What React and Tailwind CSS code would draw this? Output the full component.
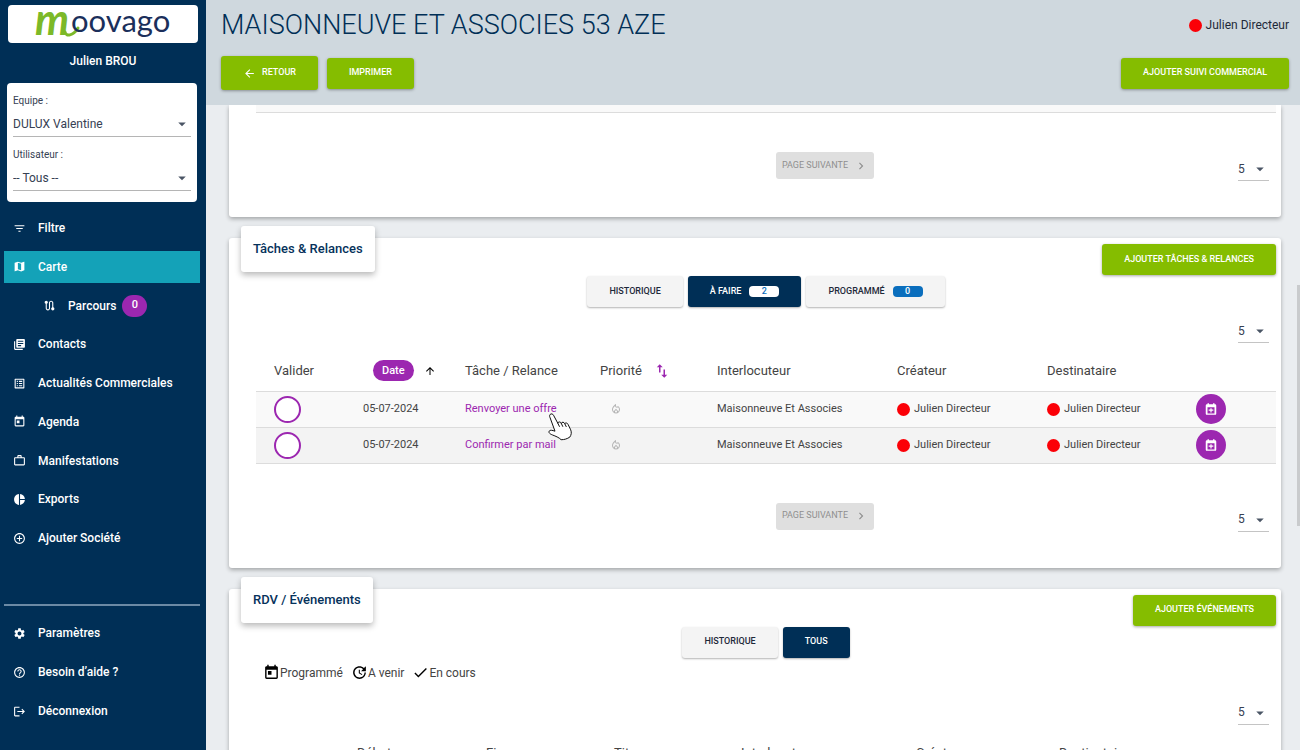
import { useState } from "react";
import clsx from "clsx";
import {
  MdAddCircleOutline,
  MdArrowBack,
  MdArrowDropDown,
  MdArrowUpward,
  MdCheck,
  MdChevronRight,
  MdFilterList,
  MdHelpOutline,
  MdLibraryBooks,
  MdListAlt,
  MdLogout,
  MdMap,
  MdOutlineLocalFireDepartment,
  MdPieChart,
  MdRoute,
  MdSettings,
  MdSwapVert,
  MdToday,
  MdUpdate,
  MdWorkOutline,
} from "react-icons/md";

const mainLinks = [
  { label: "Filtre", icon: MdFilterList },
  { label: "Carte", icon: MdMap, active: true },
  { label: "Parcours", icon: MdRoute, nested: true, count: 0 },
  { label: "Contacts", icon: MdLibraryBooks },
  { label: "Actualités Commerciales", icon: MdListAlt },
  { label: "Agenda", icon: MdToday },
  { label: "Manifestations", icon: MdWorkOutline },
  { label: "Exports", icon: MdPieChart },
  { label: "Ajouter Société", icon: MdAddCircleOutline },
];

const footerLinks = [
  { label: "Paramètres", icon: MdSettings },
  { label: "Besoin d’aide ?", icon: MdHelpOutline },
  { label: "Déconnexion", icon: MdLogout },
];

const tasks = [
  { id: 1, date: "05-07-2024", label: "Renvoyer une offre", contact: "Maisonneuve Et Associes", user: "Julien Directeur", hovered: true },
  { id: 2, date: "05-07-2024", label: "Confirmer par mail", contact: "Maisonneuve Et Associes", user: "Julien Directeur" },
];

function Logo() {
  return (
    <svg viewBox="0 0 188 38" className="h-[38px] w-[188px] overflow-visible" role="img" aria-label="Moovago">
      <text x="26" y="30" fontFamily="Lato, sans-serif" fontSize="43" fontWeight="700" fontStyle="italic" fill="#7cb928">m</text>
      <path d="M56 27c1 5 8 4 13-4" fill="none" stroke="#7cb928" strokeWidth="3" strokeLinecap="round" />
      <text x="62" y="27" fontFamily="Lato, sans-serif" fontSize="31" fill="#1b2f5b">oovago</text>
    </svg>
  );
}

function HandCursor() {
  return (
    <svg viewBox="0 0 26 30" className="pointer-events-none absolute top-[20px] left-[83px] z-10 h-[30px] w-[26px]">
      <path
        d="M2.2 2.4c1-1 2.600-.5 3.300.8l4.300 8c.2-1.500 2.700-1.900 3.500.1.500-1.500 2.800-1.500 3.500.4.600-1.100 2.600-1 3.300.8l2.600 5.300c1.100 2.800.6 5.100-.9 7.300-2.600 1.700-5.500 2.700-8.700 2.600-2.200-2.300-5.500-3.500-8.500-4.700-2.300-.8-4.400-2.300-3.400-3.900.9-1.400 3.200-.8 5.800.1L1.900 5.200c-.5-1-.4-2.100.3-2.800z"
        fill="#fff"
        stroke="#111"
        strokeWidth="1"
        strokeLinejoin="round"
      />
      <path d="M9.800 11.200l1.600 3.200M13.300 11.400l1.400 3M16.800 11.700l1.400 2.900" fill="none" stroke="#111" strokeWidth="1" strokeLinecap="round" />
    </svg>
  );
}

function CalendarPlusIcon() {
  return (
    <svg viewBox="0 0 24 24" className="size-3.5">
      <path fill="currentColor" fillRule="evenodd" d="M19 4h-1V2h-2.500v2h-7V2H6v2H5a2 2 0 0 0-2 2v14a2 2 0 0 0 2 2h14a2 2 0 0 0 2-2V6a2 2 0 0 0-2-2zM6 9h12v10.500H6z" />
      <path fill="currentColor" d="M11 10.500h2V13h3v2h-3v2.800h-2V15H8v-2h3z" />
    </svg>
  );
}

function SidebarSelect({ id, label, options }) {
  return (
    <div>
      <label htmlFor={id} className="block h-4 text-[10px] leading-[18px] text-gray-700">{label}</label>
      <div className="relative mt-1 border-b border-[#b5b5b5]">
        <select id={id} className="block h-6 w-full appearance-none bg-transparent text-[12px] text-gray-700 outline-none">
          {options.map((option) => (
            <option key={option}>{option}</option>
          ))}
        </select>
        <MdArrowDropDown className="pointer-events-none absolute top-[3px] right-0 size-[18px] text-gray-600" />
      </div>
    </div>
  );
}

function NavLink({ item }) {
  const Icon = item.icon;
  return (
    <a
      href="#"
      className={clsx(
        "flex h-8 items-center text-[12px] font-medium text-white",
        item.nested ? "pl-[39px]" : "pl-[9px]",
        item.active && "bg-[#14a2b8]"
      )}
    >
      <Icon className="mr-3 size-[13px]" />
      {item.label}
      {item.count !== undefined && (
        <span className="ml-1.5 flex h-[22px] w-[25px] items-center justify-center rounded-full bg-[#9c27b0] text-[11px]">{item.count}</span>
      )}
    </a>
  );
}

function Sidebar() {
  return (
    <aside className="flex w-[206px] shrink-0 flex-col bg-[#002f56]">
      <div className="mx-2 mt-[5px] flex h-[38px] justify-center rounded bg-white">
        <Logo />
      </div>
      <p className="pt-[7px] pb-[11px] text-center text-[12px] leading-[22px] font-medium text-white">Julien BROU</p>
      <div className="mr-[9px] ml-[7px] space-y-[9px] rounded bg-white px-1.5 pt-[9px] pb-[11px]">
        <SidebarSelect id="equipe" label="Equipe :" options={["DULUX Valentine"]} />
        <SidebarSelect id="utilisateur" label="Utilisateur :" options={["-- Tous --"]} />
      </div>
      <nav className="flex flex-1 flex-col justify-between pt-2.5 pr-1.5 pb-[50px] pl-1">
        {mainLinks.map((item) => (
          <NavLink key={item.label} item={item} />
        ))}
      </nav>
      <nav className="mr-1.5 ml-1 flex flex-col gap-[7px] border-t-2 border-[#6b8aa5] pt-[11px] pb-[23px]">
        {footerLinks.map((item) => (
          <NavLink key={item.label} item={item} />
        ))}
      </nav>
    </aside>
  );
}

function GreenButton({ children, className }) {
  return (
    <button type="button" className={clsx("flex items-center justify-center rounded-[3px] bg-[#85bd00] px-[22px] text-[9px] font-medium text-white shadow-[0_1px_3px_rgba(0,0,0,0.35)]", className)}>
      {children}
    </button>
  );
}

function TabButton({ active, onClick, children }) {
  return (
    <button
      type="button"
      onClick={onClick}
      className={clsx(
        "flex h-[31px] items-center rounded-[3px] px-[22px] text-[9px] font-medium shadow-[0_1px_2px_rgba(0,0,0,0.3)]",
        active ? "bg-[#002f56] text-white" : "bg-[#f4f4f4] text-gray-800"
      )}
    >
      {children}
    </button>
  );
}

function PageSize({ label }) {
  return (
    <div className="relative ml-auto w-[31px] border-b border-[#c4c4c4]">
      <select aria-label={label} className="block h-[23px] w-full appearance-none bg-transparent text-[12px] text-gray-700 outline-none">
        <option>5</option>
        <option>10</option>
        <option>20</option>
      </select>
      <MdArrowDropDown className="pointer-events-none absolute top-[3px] right-0 size-[18px] text-gray-600" />
    </div>
  );
}

function Pager({ label }) {
  return (
    <div className="grid grid-cols-[1fr_auto_1fr] items-end pt-[39px] pr-[7px] pb-9 pl-[125px]">
      <span />
      <button type="button" disabled className="mb-0.5 flex h-[27px] items-center rounded-[3px] bg-[#dfdfdf] px-1.5 text-[9px] text-[#8f8f8f]">
        PAGE SUIVANTE
        <MdChevronRight className="ml-1.5 size-[14px]" />
      </button>
      <PageSize label={label} />
    </div>
  );
}

function UserTag({ name }) {
  return (
    <span className="flex items-center gap-1">
      <span className="size-[13px] rounded-full bg-[#fb0007]" />
      {name}
    </span>
  );
}

function Card({ title, action, children }) {
  return (
    <section className="mt-[21px] rounded-[3px] bg-white pr-[5px] pl-[27px] shadow-[0_2px_4px_rgba(0,0,0,0.3)]">
      <div className="-ml-[15px] flex h-[38px] items-start justify-between">
        <h2 className="-mt-3 rounded-[3px] bg-white px-3 text-[13px] leading-[46px] font-medium text-[#06325b] shadow-[0_3px_6px_rgba(0,0,0,0.28)]">{title}</h2>
        <GreenButton className="mt-1.5 h-[31px]">{action}</GreenButton>
      </div>
      {children}
    </section>
  );
}

function TasksCard() {
  const [tab, setTab] = useState("todo");

  return (
    <Card title="Tâches & Relances" action="AJOUTER TÂCHES & RELANCES">
      <div className="flex justify-center gap-[5px]">
        <TabButton active={tab === "history"} onClick={() => setTab("history")}>HISTORIQUE</TabButton>
        <TabButton active={tab === "todo"} onClick={() => setTab("todo")}>
          À FAIRE
          <span className="ml-2 w-[30px] rounded bg-white text-center leading-[11px] text-[#0a6ebd]">2</span>
        </TabButton>
        <TabButton active={tab === "planned"} onClick={() => setTab("planned")}>
          PROGRAMMÉ
          <span className="ml-2 w-[30px] rounded bg-[#0a6ebd] text-center leading-[11px] text-white">0</span>
        </TabButton>
      </div>
      <div className="pt-3 pr-[7px]">
        <PageSize label="Tâches par page" />
      </div>
      <table className="w-full table-fixed border-collapse text-left text-[11px] text-[#444]">
        <colgroup>
          <col className="w-[107px]" />
          <col className="w-[102px]" />
          <col className="w-[135px]" />
          <col className="w-[117px]" />
          <col className="w-[180px]" />
          <col className="w-[150px]" />
          <col className="w-[149px]" />
          <col className="w-[80px]" />
        </colgroup>
        <thead>
          <tr className="h-12 text-[13px] text-[#444] [&>th]:pt-2 [&>th]:font-normal">
            <th className="pl-[18px]">Valider</th>
            <th>
              <span className="flex items-center pl-2.5">
                <span className="rounded-full bg-[#9c27b0] px-[9px] text-[11px] leading-[21px] font-medium text-white">Date</span>
                <MdArrowUpward className="ml-2.5 size-3 text-black" />
              </span>
            </th>
            <th>Tâche / Relance</th>
            <th>
              <span className="flex items-center">
                Priorité
                <MdSwapVert className="ml-[11px] size-[18px] text-[#9c27b0]" />
              </span>
            </th>
            <th>Interlocuteur</th>
            <th>Créateur</th>
            <th>Destinataire</th>
            <th aria-label="Planifier"></th>
          </tr>
        </thead>
        <tbody>
          {tasks.map((task) => (
            <tr key={task.id} className="h-9 border-y border-[#dcdcdc] odd:bg-[#f9f9f9] even:bg-[#f3f3f3]">
              <td className="pl-[18px]">
                <button type="button" aria-label={`Valider ${task.label}`} className="block size-[27px] rounded-full border-2 border-[#9c27b0] bg-white" />
              </td>
              <td>{task.date}</td>
              <td className="relative">
                <a href="#" className="text-[#9c27b0]">{task.label}</a>
                {task.hovered && <HandCursor />}
              </td>
              <td>
                <MdOutlineLocalFireDepartment className="ml-2.5 size-3 text-[#b5b5b5]" />
              </td>
              <td>{task.contact}</td>
              <td><UserTag name={task.user} /></td>
              <td><UserTag name={task.user} /></td>
              <td>
                <button type="button" aria-label={`Planifier ${task.label}`} className="flex size-[30px] items-center justify-center rounded-full bg-[#9c27b0] text-white">
                  <CalendarPlusIcon />
                </button>
              </td>
            </tr>
          ))}
        </tbody>
      </table>
      <Pager label="Nombre de tâches" />
    </Card>
  );
}

function EventsCard() {
  const [tab, setTab] = useState("all");

  return (
    <Card title="RDV / Événements" action="AJOUTER ÉVÉNEMENTS">
      <div className="flex justify-center gap-[5px]">
        <TabButton active={tab === "history"} onClick={() => setTab("history")}>HISTORIQUE</TabButton>
        <TabButton active={tab === "all"} onClick={() => setTab("all")}>TOUS</TabButton>
      </div>
      <div className="flex items-center gap-2 pt-1.5 pl-[7px] text-[12px] leading-[18px] text-[#444]">
        <span className="flex items-center"><MdToday className="size-[17px] text-black" />Programmé</span>
        <span className="flex items-center"><MdUpdate className="size-[17px] text-black" />A venir</span>
        <span className="flex items-center"><MdCheck className="size-[17px] text-black" />En cours</span>
      </div>
      <div className="pt-[19px] pr-[7px]">
        <PageSize label="Événements par page" />
      </div>
      <table className="w-full table-fixed text-left">
        <colgroup>
          <col className="w-[101px]" />
          <col className="w-[129px]" />
          <col className="w-[128px]" />
          <col className="w-[127px]" />
          <col className="w-[175px]" />
          <col className="w-[143px]" />
          <col className="w-[217px]" />
        </colgroup>
        <thead>
          <tr className="h-12 text-[13px] text-[#444] [&>th]:pt-2 [&>th]:font-normal">
            <th aria-label="Statut"></th>
            <th>Début</th>
            <th>Fin</th>
            <th>Titre</th>
            <th>Interlocuteur</th>
            <th>Créateur</th>
            <th>Destinataire</th>
          </tr>
        </thead>
      </table>
    </Card>
  );
}

export default function App() {
  return (
    <div className="flex h-screen overflow-hidden bg-[#eaedf0] font-[Roboto,sans-serif]">
      <Sidebar />
      <div className="relative flex min-w-0 flex-1 flex-col">
        <header className="shrink-0 bg-[#cfd8de] pt-[5px] pr-[11px] pb-[15px] pl-[15px]">
          <div className="flex items-center justify-between">
            <h1 className="text-[27px] leading-10 font-light text-[#002f56]">MAISONNEUVE ET ASSOCIES 53 AZE</h1>
            <span className="text-[12px] text-gray-800"><UserTag name="Julien Directeur" /></span>
          </div>
          <div className="mt-[11px] flex items-center">
            <GreenButton className="h-[34px]">
              <MdArrowBack className="mr-1.5 size-[13px]" />
              RETOUR
            </GreenButton>
            <GreenButton className="ml-[9px] h-[31px]">IMPRIMER</GreenButton>
            <GreenButton className="ml-auto h-[31px]">AJOUTER SUIVI COMMERCIAL</GreenButton>
          </div>
        </header>
        <main className="min-h-0 flex-1 overflow-hidden pr-[19px] pl-[23px]">
          <section className="rounded-b-[3px] bg-white pr-[5px] pl-[27px] shadow-[0_2px_4px_rgba(0,0,0,0.3)]">
            <div className="h-2 border-b border-[#dcdcdc] bg-[#f9f9f9]" />
            <Pager label="Nombre de suivis" />
          </section>
          <TasksCard />
          <EventsCard />
        </main>
        <div className="absolute top-[285px] right-0 h-[241px] w-[3px] bg-[#c9cbcd]" />
      </div>
    </div>
  );
}
